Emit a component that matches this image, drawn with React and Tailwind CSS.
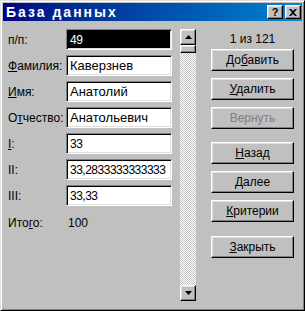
import React from 'react';

const raised =
    'bg-[#c0c0c0] border border-t-white border-l-white border-r-black border-b-black shadow-[inset_-1px_-1px_#808080,inset_1px_1px_#dfdfdf]';
const sunken =
    'border border-t-[#808080] border-l-[#808080] border-r-white border-b-white shadow-[inset_1px_1px_#000,inset_-1px_-1px_#dfdfdf]';

const fields = [
    { label: 'п/п:', value: '49', selected: true, num: true },
    { label: <><u>Ф</u>амилия:</>, value: 'Каверзнев' },
    { label: <><u>И</u>мя:</>, value: 'Анатолий' },
    { label: <>О<u>т</u>чество:</>, value: 'Анатольевич' },
    { label: <><u>I</u>:</>, value: '33', num: true },
    { label: 'II:', value: '33,2833333333333', num: true },
    { label: 'III:', value: '33,33', num: true },
];

function Btn({ children, disabled, className = '' }) {
    return (
        <div className={`${raised} h-[22px] w-[83px] flex items-center justify-center ${disabled ? 'text-[#808080]' : 'text-black'} ${className}`}>
            <span>{children}</span>
        </div>
    );
}

function Arrow({ down }) {
    return (
        <svg width="7" height="4" viewBox="0 0 7 4">
            <polygon points={down ? '0,0 7,0 3.5,4' : '0,4 7,4 3.5,0'} fill="#000" />
        </svg>
    );
}

export default function App() {
    return (
        <div
            className="w-[305px] h-[311px] bg-[#c0c0c0] border border-t-[#dfdfdf] border-l-[#dfdfdf] border-r-black border-b-black shadow-[inset_1px_1px_#fff,inset_-1px_-1px_#808080] p-[2px] text-[12px] leading-none text-black"
            style={{ fontFamily: '"Liberation Sans", Arial, sans-serif' }}
        >
            {/* Title bar */}
            <div className="h-[18px] bg-gradient-to-r from-[#000080] to-[#1084d0] flex items-center pl-[3px] pr-[1px]">
                <span className="flex-1 text-white font-bold text-[14px] tracking-[2px]">База данных</span>
                <div className={`${raised} w-[16px] h-[14px] flex items-center justify-center font-bold text-[11px]`}>?</div>
                <div className={`${raised} w-[16px] h-[14px] flex items-center justify-center ml-[2px]`}>
                    <svg width="8" height="7" viewBox="0 0 8 7">
                        <path d="M0 0h2l2 2 2-2h2L5 3.5 8 7H6L4 5 2 7H0l3-3.5z" fill="#000" />
                    </svg>
                </div>
            </div>

            {/* Body */}
            <div className="flex pt-[8px] pl-[5px]">
                <div className="w-[167px] flex flex-col gap-[5px]">
                    {fields.map((f, i) => (
                        <div key={i} className="flex items-center h-[21px]">
                            <div className="w-[58px]">{f.label}</div>
                            <div className={`${sunken} w-[106px] h-[21px] flex items-center pl-[3px] overflow-hidden whitespace-nowrap ${f.num ? 'text-[12px] tracking-[-0.5px]' : 'text-[13px]'} ${f.selected ? 'bg-black text-white' : 'bg-white'}`}>
                                {f.value}
                            </div>
                        </div>
                    ))}
                    <div className="flex items-center h-[21px] mt-[1px]">
                        <div className="w-[60px]">Ито<u>г</u>о:</div>
                        <div>100</div>
                    </div>
                </div>

                {/* Scrollbar */}
                <div className="w-[16px] h-[272px] ml-[5px] flex flex-col bg-[repeating-conic-gradient(#c0c0c0_0%_25%,#ffffff_0%_50%)] bg-[length:2px_2px]">
                    <div className={`${raised} h-[16px] flex items-center justify-center`}><Arrow /></div>
                    <div className={`${raised} h-[8px]`}></div>
                    <div className="flex-1"></div>
                    <div className={`${raised} h-[16px] flex items-center justify-center`}><Arrow down /></div>
                </div>

                {/* Buttons */}
                <div className="ml-[15px] w-[83px] flex flex-col">
                    <div className="h-[20px] flex items-center justify-center">1 из 121</div>
                    <Btn>До<u>б</u>авить</Btn>
                    <Btn className="mt-[7px]"><u>У</u>далить</Btn>
                    <Btn className="mt-[7px]" disabled>Вернуть</Btn>
                    <Btn className="mt-[13px]"><u>Н</u>азад</Btn>
                    <Btn className="mt-[7px]"><u>Д</u>алее</Btn>
                    <Btn className="mt-[7px]"><u>К</u>ритерии</Btn>
                    <Btn className="mt-[14px]"><u>З</u>акрыть</Btn>
                </div>
            </div>
        </div>
    );
}
